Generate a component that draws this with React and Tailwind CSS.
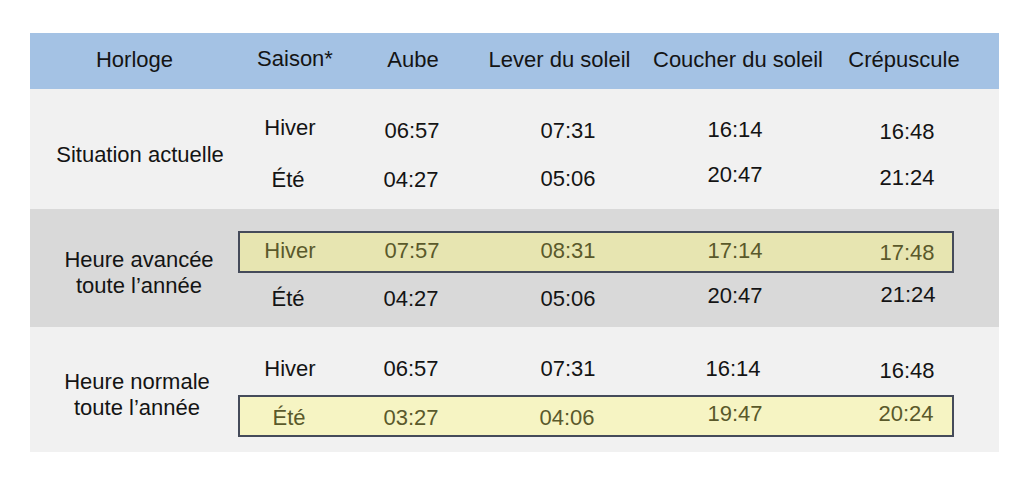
import React from "react";

const font = { fontFamily: '"Liberation Sans", Arial, Helvetica, sans-serif' };

function Cell({ children, cls = "" }) {
  return (
    <div className={"flex h-full items-center justify-center whitespace-nowrap " + cls}>
      {children}
    </div>
  );
}

function SubRow({ cells, box, tone }) {
  const base =
    "grid h-[42px] w-[716px] grid-cols-[100px_144px_168px_166px_138px] border-2 ";
  const style = box
    ? tone === "a"
      ? "border-[#454b5a] bg-[#e7e5b1] text-[#5a592b]"
      : "border-[#454b5a] bg-[#f6f4c3] text-[#5a592b]"
    : "border-transparent text-[#141414]";
  return (
    <div className={base + style}>
      {cells.map((c, i) => (
        <Cell key={i} cls={c[1] || ""}>
          {c[0]}
        </Cell>
      ))}
    </div>
  );
}

export default function App() {
  return (
    <div className="min-h-[490px] w-[1024px] bg-white pt-[33px] pl-[30px]" style={font}>
      <div className="w-[969px] text-[22px] text-[#141414]">
        {/* Header */}
        <div className="grid h-[56px] grid-cols-[209px_112px_124px_169px_188px_144px_1fr] bg-[#a4c2e4]">
          <Cell cls="pb-[4px]">Horloge</Cell>
          <Cell cls="pb-[6px]">Saison*</Cell>
          <Cell cls="pb-[4px]">Aube</Cell>
          <Cell cls="pb-[4px]">Lever du soleil</Cell>
          <Cell cls="pb-[4px]">Coucher du soleil</Cell>
          <Cell cls="pb-[4px]">Crépuscule</Cell>
          <div />
        </div>

        {/* Situation actuelle */}
        <div className="flex h-[120px] bg-[#f1f1f1]">
          <div className="flex w-[208px] items-center justify-center pt-[12px] pl-[12px] text-center leading-[26px]">
            Situation actuelle
          </div>
          <div className="flex flex-col pt-[18px]">
            <SubRow
              cells={[
                ["Hiver", "pb-[2px]"],
                ["06:57", "pt-[4px]"],
                ["07:31", "pt-[4px]"],
                ["16:14", "pt-[2px]"],
                ["16:48", "pt-[6px] pl-[40px]"],
              ]}
            />
            <div className="h-[7px]" />
            <SubRow
              cells={[
                ["Été", "pt-[2px] pr-[4px]"],
                ["04:27", "pt-[2px] pr-[2px]"],
                ["05:06", ""],
                ["20:47", "pb-[8px]"],
                ["21:24", "pb-[2px] pl-[40px]"],
              ]}
            />
          </div>
        </div>

        {/* Heure avancée */}
        <div className="flex h-[118px] bg-[#d9d9d9]">
          <div className="flex w-[208px] items-center justify-center pt-[10px] pl-[10px] text-center leading-[26px]">
            Heure avancée
            <br />
            toute l’année
          </div>
          <div className="flex flex-col pt-[22px]">
            <SubRow
              box
              tone="a"
              cells={[
                ["Hiver", "pb-[4px]"],
                ["07:57", "pb-[4px]"],
                ["08:31", "pb-[4px]"],
                ["17:14", "pb-[4px]"],
                ["17:48", "pl-[40px]"],
              ]}
            />
            <div className="h-[3px]" />
            <SubRow
              cells={[
                ["Été", "pr-[4px]"],
                ["04:27", "pr-[2px]"],
                ["05:06", ""],
                ["20:47", "pb-[6px]"],
                ["21:24", "pb-[8px] pl-[42px]"],
              ]}
            />
          </div>
        </div>

        {/* Heure normale */}
        <div className="flex h-[125px] bg-[#f1f1f1]">
          <div className="flex w-[208px] items-center justify-center pt-[10px] pl-[6px] text-center leading-[26px]">
            Heure normale
            <br />
            toute l’année
          </div>
          <div className="flex flex-col pt-[20px]">
            <SubRow
              cells={[
                ["Hiver", ""],
                ["06:57", "pr-[2px]"],
                ["07:31", ""],
                ["16:14", "pr-[4px]"],
                ["16:48", "pt-[4px] pl-[40px]"],
              ]}
            />
            <div className="h-[6px]" />
            <SubRow
              box
              tone="b"
              cells={[
                ["Été", "pt-[2px] pr-[2px]"],
                ["03:27", "pt-[2px] pr-[2px]"],
                ["04:06", "pt-[2px] pr-[2px]"],
                ["19:47", "pb-[6px]"],
                ["20:24", "pb-[6px] pl-[38px]"],
              ]}
            />
          </div>
        </div>
      </div>
    </div>
  );
}
